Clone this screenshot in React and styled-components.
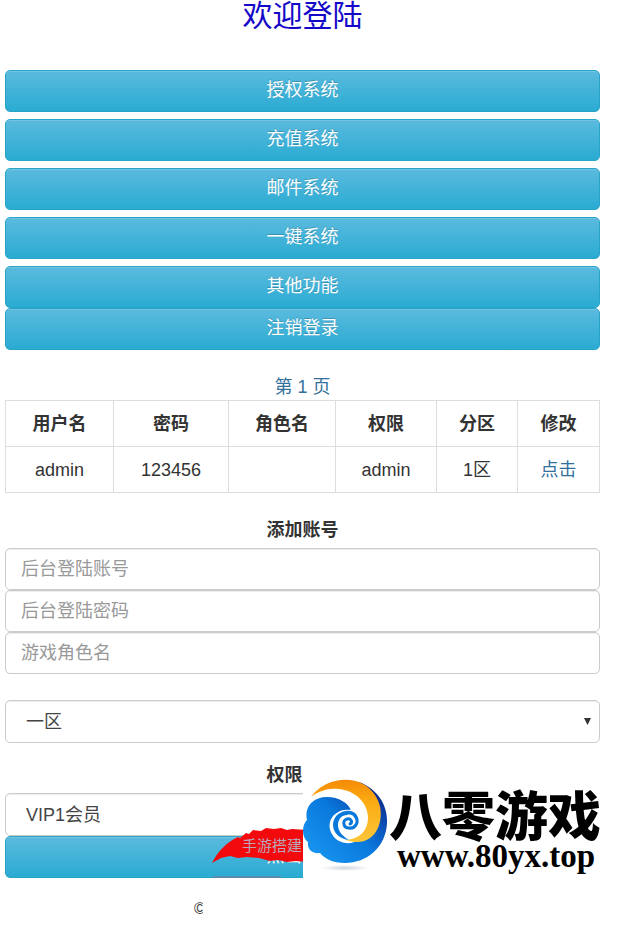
import React from "react";
import styled, { createGlobalStyle } from "styled-components";

const GlobalStyle = createGlobalStyle`
  * { box-sizing: border-box; }
  body {
    margin: 0;
    background: #fff;
    color: #333;
    font-family: "Liberation Sans", "Noto Sans CJK SC", sans-serif;
    font-size: 18px;
    line-height: 26px;
  }
`;

const Page = styled.main`
  display: flex;
  flex-direction: column;
  padding: 0 23px 0 5px;
`;

const Title = styled.h1`
  margin: 0 0 38px;
  font-size: 30px;
  line-height: 32px;
  font-weight: 400;
  text-align: center;
  color: #1408c8;
`;

const Menu = styled.nav`
  display: flex;
  flex-direction: column;
  gap: 7px;
`;

const Stack = styled.div`
  display: flex;
  flex-direction: column;
`;

const Button = styled.button`
  width: 100%;
  height: 42px;
  padding: 0 16px 3px;
  border: 1px solid #28a4c9;
  border-radius: 5px;
  background: linear-gradient(#5bbade, #2aabd2);
  box-shadow: inset 0 1px 0 rgba(255, 255, 255, 0.15);
  color: #fff;
  font: inherit;
  text-shadow: 0 -1px 0 rgba(0, 0, 0, 0.2);
  cursor: pointer;
`;

const Link = styled.a`
  color: #34709c;
  text-decoration: none;
`;

const Pager = styled.div`
  margin-top: 24px;
  text-align: center;
`;

const Table = styled.table`
  width: 100%;
  table-layout: fixed;
  border-collapse: collapse;
  text-align: center;
`;

const Col = styled.col`
  width: ${(p) => p.$width}px;
`;

const Cell = styled.td`
  height: 46px;
  padding: 0 8px;
  border: 1px solid #ddd;
`;

const Form = styled.form`
  position: relative;
  display: flex;
  flex-direction: column;
  margin-top: 24px;
`;

const Heading = styled.label`
  margin-bottom: 5px;
  font-weight: 700;
  text-align: center;
`;

const Input = styled.input`
  width: 100%;
  height: 42px;
  padding: 0 15px;
  border: 1px solid #ccc;
  border-radius: 5px;
  box-shadow: inset 0 1px 1px rgba(0, 0, 0, 0.075);
  color: #555;
  font: inherit;
  &::placeholder { color: #999; opacity: 1; }
`;

const SelectBox = styled.div`
  display: grid;
  align-items: center;
  margin: ${(p) => (p.$spaced ? "26px 0 19px" : "0")};
  & > * { grid-area: 1 / 1; }
`;

const Select = styled.select`
  width: 100%;
  height: 43px;
  padding: 0 20px;
  appearance: none;
  border: 1px solid #ccc;
  border-radius: 5px;
  background: #fff;
  box-shadow: inset 0 1px 1px rgba(0, 0, 0, 0.075);
  color: #444;
  font: inherit;
`;

const Arrow = styled.svg`
  justify-self: end;
  margin-right: 9px;
  pointer-events: none;
`;

const Brush = styled.svg`
  position: absolute;
  right: 292px;
  bottom: 0;
  width: 96px;
  height: 52px;
  pointer-events: none;
`;

const Brand = styled.aside`
  position: absolute;
  right: -3px;
  bottom: 0;
  display: flex;
  width: 300px;
  height: 118px;
  background: #fff;
  color: #000;
`;

const Emblem = styled.svg`
  flex: none;
  width: 86px;
  height: 118px;
`;

const BrandText = styled.div`
  display: flex;
  flex-direction: column;
  padding-top: 29px;
  white-space: nowrap;
`;

const BrandName = styled.strong`
  font-size: 53px;
  line-height: 58px;
  font-weight: 900;
`;

const BrandUrl = styled.strong`
  padding-left: 8px;
  font-family: "Liberation Serif", serif;
  font-size: 33px;
  line-height: 18px;
`;

const Footer = styled.footer`
  display: flex;
  margin: 18px 0 8px 189px;
`;

const Mark = styled.span`
  width: 9px;
  overflow: hidden;
  font-size: 16px;
`;

const columns = [
  ["用户名", 108], ["密码", 115], ["角色名", 107], ["权限", 101], ["分区", 81], ["修改", 82],
];

function Dropdown({ id, value, spaced, label }) {
  return (
    <SelectBox $spaced={spaced}>
      <Select id={id} aria-label={label} defaultValue={value}>
        <option>{value}</option>
      </Select>
      <Arrow width="7" height="7" viewBox="0 0 7 7" aria-hidden="true">
        <path d="M0 0h7L3.5 7z" fill="#333" />
      </Arrow>
    </SelectBox>
  );
}

export default function App() {
  return (
    <>
      <GlobalStyle />
      <Page>
        <Title>欢迎登陆</Title>
        <Menu>
          {["授权系统", "充值系统", "邮件系统", "一键系统"].map((t) => (
            <Button key={t} type="button">{t}</Button>
          ))}
          <Stack>
            <Button type="button">其他功能</Button>
            <Button type="button">注销登录</Button>
          </Stack>
        </Menu>
        <Pager><Link href="#page-1">第 1 页</Link></Pager>
        <Table>
          <colgroup>{columns.map(([t, w]) => <Col key={t} $width={w} />)}</colgroup>
          <thead>
            <tr>{columns.map(([t]) => <Cell as="th" key={t}>{t}</Cell>)}</tr>
          </thead>
          <tbody>
            <tr>
              <Cell>admin</Cell>
              <Cell>123456</Cell>
              <Cell />
              <Cell>admin</Cell>
              <Cell>1区</Cell>
              <Cell><Link href="#edit">点击</Link></Cell>
            </tr>
          </tbody>
        </Table>
        <Form onSubmit={(e) => e.preventDefault()}>
          <Heading htmlFor="account">添加账号</Heading>
          <Input id="account" placeholder="后台登陆账号" />
          <Input aria-label="后台登陆密码" placeholder="后台登陆密码" />
          <Input aria-label="游戏角色名" placeholder="游戏角色名" />
          <Dropdown id="zone" label="分区" value="一区" spaced />
          <Heading htmlFor="level">权限设置</Heading>
          <Dropdown id="level" value="VIP1会员" />
          <Button>点击添加</Button>
          <Brush viewBox="0 0 96 52" aria-hidden="true">
            <path d="M0 37C6 25 15 16 26 11l2 1 6-5 3 1 4-4 8 1 5-3 8 1 7-1 6 2 5-1 16 1v32l-12-1-9 1-9-2-8 1-11-3-12-1-9 1-8-2-9 2z" fill="#f20a0c" />
            <path d="M1 51h68" stroke="#8c6f91" />
            <text x="30" y="25" fontSize="15" fill="#b9a5b8">手游搭建</text>
          </Brush>
          <Brand>
            <Emblem viewBox="0 0 86 118" aria-hidden="true">
              <defs>
                <linearGradient id="sea" x1="0" y1="1" x2="1" y2="0">
                  <stop offset="0" stopColor="#1a9cf5" />
                  <stop offset=".5" stopColor="#0a78dc" />
                  <stop offset=".72" stopColor="#0b4db4" />
                  <stop offset="1" stopColor="#10106e" />
                </linearGradient>
                <linearGradient id="sun" x1="0" y1="0" x2="0" y2="1">
                  <stop offset="0" stopColor="#f58a08" />
                  <stop offset=".35" stopColor="#fbab12" />
                  <stop offset="1" stopColor="#fbc63a" />
                </linearGradient>
                <radialGradient id="shade">
                  <stop offset="0" stopColor="#cfd6dc" />
                  <stop offset="1" stopColor="#fff" />
                </radialGradient>
              </defs>
              <ellipse cx="42" cy="108" rx="25" ry="3" fill="url(#shade)" />
              <path d="M56 22C75 29 85 46 84 63c-1 24-20 40-42 40-12 0-20-4-25-10C10 94 4 90 5 82-1 78-2 66 4 60 1 48 9 37 24 37c12 0 21 6 24 13l22 0z" fill="url(#sea)" />
              <path d="M7 38C25 24 46 26 59 38c13 14 10 33-3 42-8 5-19 4-25-3-6-7-6-16 0-22 5-5 11-6 17-5C45 41 37 37 29 36c-8-1-15 1-20 6z" fill="#fff" />
              <path d="M8 37C19 21 43 15 60 24c16 9 22 28 15 44-6 13-18 17-32 12 14-1 22-10 22-22 0-15-13-28-30-29-10-1-19 2-27 8" fill="url(#sun)" />
              <path d="M55 58C54 53 49 50 43 51c-8 1-13 7-13 14 0 8 7 14 16 15-7-4-11-9-11-15 0-6 4-10 9-10 3-1 6 0 7 2z" fill="#0878db" />
              <path d="M52 56c5 6 0 13-6 12-6 0-7-8-2-9 4-1 6 3 3 5" fill="none" stroke="#0878db" strokeWidth="3" strokeLinecap="round" />
            </Emblem>
            <BrandText>
              <BrandName>八零游戏</BrandName>
              <BrandUrl>www.80yx.top</BrandUrl>
            </BrandText>
          </Brand>
        </Form>
        <Footer><Mark>©</Mark></Footer>
      </Page>
    </>
  );
}
